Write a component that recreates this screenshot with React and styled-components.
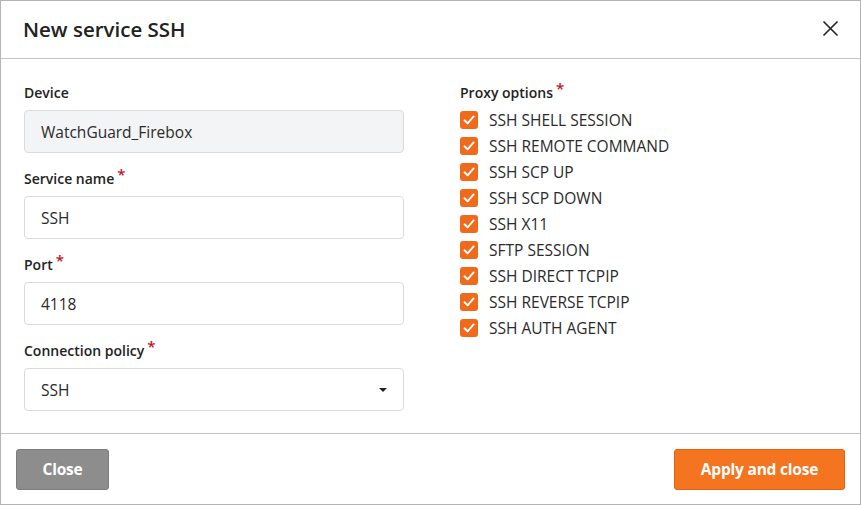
import styled, { createGlobalStyle } from 'styled-components';

const GlobalStyle = createGlobalStyle`
  * { box-sizing: border-box; }
  html, body { margin: 0; padding: 0; background: #fff; }
  body { font-family: "Open Sans", "Noto Sans", sans-serif; color: #222; }
`;

const proxyOptions = [
  'SSH SHELL SESSION',
  'SSH REMOTE COMMAND',
  'SSH SCP UP',
  'SSH SCP DOWN',
  'SSH X11',
  'SFTP SESSION',
  'SSH DIRECT TCPIP',
  'SSH REVERSE TCPIP',
  'SSH AUTH AGENT',
];

const fields = [
  { label: 'Device', value: 'WatchGuard_Firebox', readOnly: true },
  { label: 'Service name', value: 'SSH', required: true },
  { label: 'Port', value: '4118', required: true },
];

const CheckIcon = () => (
  <svg width="12" height="12" viewBox="0 0 12 12" fill="none">
    <path d="M1.5 6.3 L4.6 9.3 L10.6 2.4" stroke="#fff" strokeWidth="1.9" strokeLinecap="round" strokeLinejoin="round" />
  </svg>
);

const App = () => {
  return (
    <>
      <GlobalStyle />
      <Dialog>
        <Header>
          <Title>New service SSH</Title>
          <CloseIcon aria-label="close">
            <svg width="17" height="17" viewBox="0 0 17 17">
              <path d="M1.5 1.5 L15.5 15.5 M15.5 1.5 L1.5 15.5" stroke="#222" strokeWidth="1.6" />
            </svg>
          </CloseIcon>
        </Header>
        <Body>
          <Column>
            {fields.map((f) => (
              <Field key={f.label}>
                <Label>
                  {f.label}
                  {f.required && <Star>*</Star>}
                </Label>
                <Input readOnly={f.readOnly}>{f.value}</Input>
              </Field>
            ))}
            <Field>
              <Label>
                Connection policy<Star>*</Star>
              </Label>
              <Input>
                SSH
                <Caret />
              </Input>
            </Field>
          </Column>
          <ProxyColumn>
            <Label>
              Proxy options<Star>*</Star>
            </Label>
            <CheckList>
              {proxyOptions.map((opt) => (
                <CheckRow key={opt}>
                  <Box>
                    <CheckIcon />
                  </Box>
                  {opt}
                </CheckRow>
              ))}
            </CheckList>
          </ProxyColumn>
        </Body>
        <Footer>
          <Button>Close</Button>
          <Button primary>Apply and close</Button>
        </Footer>
      </Dialog>
    </>
  );
};

const Dialog = styled.div`
  width: 861px;
  height: 505px;
  border: 1px solid #b4b4b4;
  display: flex;
  flex-direction: column;
  background: #fff;
`;

const Header = styled.div`
  height: 58px;
  flex: none;
  display: flex;
  align-items: center;
  justify-content: space-between;
  padding: 0 21px 0 22px;
  border-bottom: 1px solid #c4c4c4;
`;

const Title = styled.h1`
  margin: 0 0 2px 0;
  font-size: 20.5px;
  font-weight: 600;
  color: #222;
`;

const CloseIcon = styled.div`
  display: flex;
  margin-bottom: 2px;
`;

const Body = styled.div`
  flex: 1;
  display: flex;
  gap: 56px;
  padding: 24px 23px 0 23px;
`;

const Column = styled.div`
  width: 380px;
  display: flex;
  flex-direction: column;
  gap: 16px;
`;

const Field = styled.div`
  display: flex;
  flex-direction: column;
  gap: 7px;
`;

const Label = styled.div`
  font-size: 14px;
  font-weight: 600;
  color: #222;
  line-height: 20px;
  height: 20px;
`;

const Star = styled.span`
  color: #c4121f;
  font-size: 15px;
  line-height: 1;
  margin-left: 3px;
  position: relative;
  top: -4px;
`;

const Input = styled.div`
  height: 43px;
  border: 1px solid #d9dbdd;
  border-radius: 4px;
  background: ${(p) => (p.readOnly ? '#f3f4f5' : '#fff')};
  padding: 0 16px;
  display: flex;
  align-items: center;
  justify-content: space-between;
  font-size: 15.5px;
  color: #2a2a2a;
`;

const Caret = styled.span`
  width: 0;
  height: 0;
  border-left: 4px solid transparent;
  border-right: 4px solid transparent;
  border-top: 4px solid #222;
`;

const ProxyColumn = styled.div`
  display: flex;
  flex-direction: column;
  gap: 8px;
`;

const CheckList = styled.div`
  display: flex;
  flex-direction: column;
  gap: 8px;
`;

const CheckRow = styled.div`
  display: flex;
  align-items: center;
  gap: 11px;
  height: 18px;
  font-size: 15.5px;
  color: #2a2a2a;
  white-space: nowrap;
`;

const Box = styled.span`
  width: 18px;
  height: 18px;
  border-radius: 3px;
  background: #f06a1c;
  display: flex;
  align-items: center;
  justify-content: center;
`;

const Footer = styled.div`
  height: 71px;
  flex: none;
  border-top: 1px solid #c4c4c4;
  display: flex;
  align-items: center;
  justify-content: space-between;
  padding: 0 15px;
`;

const Button = styled.button`
  height: 41px;
  width: ${(p) => (p.primary ? '171px' : '93px')};
  padding: 0;
  border-radius: 3px;
  border: 1px solid ${(p) => (p.primary ? '#e5600f' : '#7d7d7d')};
  background: ${(p) => (p.primary ? '#f47420' : '#8d8d8d')};
  color: #fff;
  font-family: "Open Sans", sans-serif;
  font-size: 15.5px;
  font-weight: 700;
  letter-spacing: -0.2px;
  white-space: nowrap;
`;

export default App;
